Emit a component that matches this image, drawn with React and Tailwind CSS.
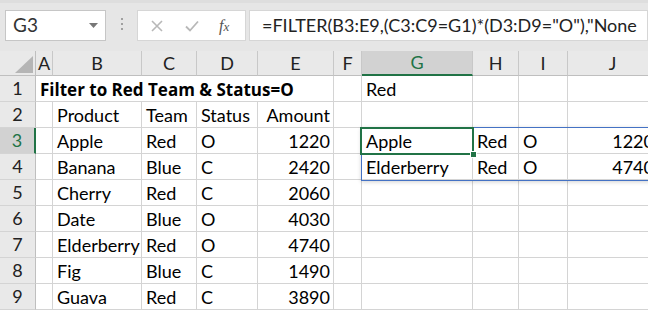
import React from "react";

const F = { fontFamily: "Lato, 'Open Sans', sans-serif" };

const widths = [17, 89, 55, 61, 76, 28, 111, 46, 49, 90];
const letters = ["A", "B", "C", "D", "E", "F", "G", "H", "I", "J"];

const data = [
  ["", "Product", "Team", "Status", "Amount", "", "", "", "", ""],
  ["", "Apple", "Red", "O", "1220", "", "Apple", "Red", "O", "1220"],
  ["", "Banana", "Blue", "C", "2420", "", "Elderberry", "Red", "O", "4740"],
  ["", "Cherry", "Red", "C", "2060", "", "", "", "", ""],
  ["", "Date", "Blue", "O", "4030", "", "", "", "", ""],
  ["", "Elderberry", "Red", "O", "4740", "", "", "", "", ""],
  ["", "Fig", "Blue", "C", "1490", "", "", "", "", ""],
  ["", "Guava", "Red", "C", "3890", "", "", "", "", ""],
];

function Cell({ w, children, right }) {
  return (
    <div
      className={`shrink-0 h-[26px] border-r border-b border-[#d4d4d4] flex items-end overflow-hidden whitespace-nowrap pb-[3px] text-[18px] leading-none text-black ${right ? "justify-end pr-[3px]" : "pl-[4px]"}`}
      style={{ width: w }}
    >
      {children}
    </div>
  );
}

function RowHead({ n, sel }) {
  return (
    <div
      className={`shrink-0 w-[36px] h-[26px] border-b border-[#d4d4d4] flex items-center justify-center text-[18px] ${sel ? "bg-[#d2d2d2] text-[#217346] border-r-2 border-r-[#217346]" : "bg-[#e9e9e9] text-[#222] border-r border-r-[#bfbfbf]"}`}
    >
      {n}
    </div>
  );
}

export default function App() {
  return (
    <div className="w-[648px] h-[310px] overflow-hidden bg-white relative" style={F}>
      {/* top bar */}
      <div className="h-[51px] bg-[#e6e6e6] flex items-start pt-[10px] border-t-[3px] border-[#dedede]">
        <div className="ml-[5px] w-[101px] h-[31px] bg-white border border-[#c6c6c6] flex items-center pl-[7px] pr-[7px] justify-between -mt-[3px]">
          <span className="text-[19px] text-[#333]">G3</span>
          <svg width="9" height="5" viewBox="0 0 9 5"><path d="M0 0h9L4.5 5z" fill="#777" /></svg>
        </div>
        <div className="w-[31px] h-[28px] flex flex-col items-center justify-center gap-[3px] -mt-[3px]">
          <div className="w-[2px] h-[2px] bg-[#a0a0a0]" />
          <div className="w-[2px] h-[2px] bg-[#a0a0a0]" />
          <div className="w-[2px] h-[2px] bg-[#a0a0a0]" />
        </div>
        <div className="w-[109px] h-[31px] bg-white border border-[#d6d6d6] flex items-center -mt-[3px]">
          <svg className="ml-[13px]" width="12" height="12" viewBox="0 0 12 12"><path d="M1 1L11 11M11 1L1 11" stroke="#b8b8b8" strokeWidth="1.6" /></svg>
          <svg className="ml-[22px]" width="14" height="12" viewBox="0 0 14 12"><path d="M1 6.5L5 10.5L13 1.5" stroke="#b8b8b8" strokeWidth="1.8" fill="none" /></svg>
          <span className="ml-[20px] text-[16px] italic text-[#555]" style={{ fontFamily: "'Liberation Serif', serif" }}>f<span className="text-[13px]">x</span></span>
        </div>
        <div className="ml-[3px] flex-1 h-[31px] bg-white border border-[#d6d6d6] flex items-center pl-[12px] -mt-[3px] overflow-hidden whitespace-nowrap">
          <span className="text-[18px] text-[#222]">=FILTER(B3:E9,(C3:C9=G1)*(D3:D9="O"),"None</span>
        </div>
      </div>

      {/* column headers */}
      <div className="flex h-[25px]">
        <div className="shrink-0 w-[36px] h-[25px] bg-[#e9e9e9] border-r border-b border-[#bfbfbf] relative">
          <svg className="absolute left-[15px] top-[5px]" width="18" height="17" viewBox="0 0 18 17"><path d="M18 0V17H0z" fill="#b5b5b5" /></svg>
        </div>
        {letters.map((l, i) => (
          <div
            key={l}
            className={`shrink-0 h-[25px] flex items-center justify-center text-[18px] border-r ${l === "G" ? "bg-[#d2d2d2] text-[#217346] border-b-2 border-b-[#217346] border-r-[#c8c8c8]" : "bg-[#e9e9e9] text-[#222] border-b border-[#bfbfbf] border-r-[#c8c8c8]"}`}
            style={{ width: widths[i] }}
          >
            {l}
          </div>
        ))}
      </div>

      {/* row 1 */}
      <div className="flex">
        <RowHead n={1} />
        <Cell w={17 + 89 + 55 + 61 + 76}>
          <span className="font-bold text-[17px]" style={{ fontFamily: "'Open Sans', Lato, sans-serif" }}>Filter to Red Team &amp; Status=O</span>
        </Cell>
        <Cell w={28} />
        <Cell w={111}>Red</Cell>
        <Cell w={46} />
        <Cell w={49} />
        <Cell w={90} />
      </div>

      {data.map((row, r) => (
        <div className="flex" key={r}>
          <RowHead n={r + 2} sel={r + 2 === 3} />
          {row.map((v, c) => (
            <Cell key={c} w={widths[c]} right={c === 4 || c === 9}>
              {v}
            </Cell>
          ))}
        </div>
      ))}

      {/* spill range border */}
      <div className="absolute left-[361px] top-[127px] w-[300px] h-[54px] border border-[#4472c4] shadow-[0_1px_4px_rgba(0,0,0,0.18)] pointer-events-none" />
      {/* active cell */}
      <div className="absolute left-[360px] top-[127px] w-[114px] h-[28px] border-2 border-[#217346] pointer-events-none" />
      <div className="absolute left-[470px] top-[151px] w-[7px] h-[7px] bg-[#217346] border border-white pointer-events-none" />
    </div>
  );
}
